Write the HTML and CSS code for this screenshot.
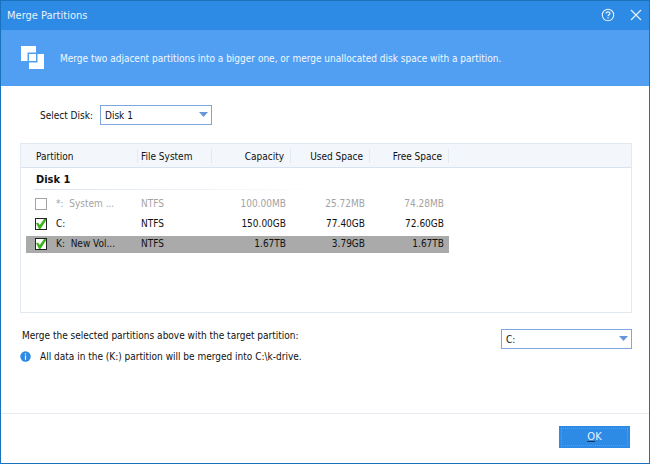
FILE: index.html
```html
<!DOCTYPE html>
<html lang="en">
<head>
<meta charset="utf-8">
<title>Merge Partitions</title>
<link rel="stylesheet" href="styles.css">
</head>
<body>
<main class="dialog">
  <header class="titlebar">
    <h1 class="title">Merge Partitions</h1>
    <button class="icon-button" type="button" aria-label="Help">
      <svg width="14" height="14" viewBox="0 0 14 14" fill="none" stroke="currentColor"><circle cx="7" cy="7" r="5.7" stroke-width="1.1"/><path d="M5.1 5.6C5.1 3.4 8.9 3.4 8.9 5.5C8.9 6.8 7 6.7 7 8.2M7 9.2V10.4" stroke-width="1.3"/></svg>
    </button>
    <button class="icon-button" type="button" aria-label="Close">
      <svg width="14" height="14" viewBox="0 0 14 14" fill="none" stroke="currentColor" stroke-width="1.2"><path d="M2 2L12 12M12 2L2 12"/></svg>
    </button>
  </header>
  <section class="banner">
    <svg class="banner-icon" width="24" height="24" viewBox="0 0 24 24"><path fill="#fff" d="M0 0H15V6.5H6.5V15H0ZM16.5 8H23V23H8V16.5H16.5ZM8 8H15V15H8Z"/></svg>
    <p>Merge two adjacent partitions into a bigger one, or merge unallocated disk space with a partition.</p>
  </section>
  <section class="content">
    <div class="disk-field">
      <label for="disk">Select Disk:</label>
      <span class="select disk-select"><select id="disk"><option>Disk 1</option></select></span>
    </div>
    <div class="list">
      <table>
        <colgroup><col class="col-name"><col class="col-fs"><col class="col-size"><col class="col-size"><col class="col-size"><col></colgroup>
        <thead>
          <tr><th scope="col">Partition</th><th scope="col">File System</th><th scope="col" class="num">Capacity</th><th scope="col" class="num">Used Space</th><th scope="col" class="num">Free Space</th><td></td></tr>
        </thead>
        <tbody>
          <tr class="group"><th colspan="6" scope="rowgroup">Disk 1</th></tr>
          <tr class="disabled"><td><label class="name"><input type="checkbox" disabled><span>*:&nbsp; System ...</span></label></td><td>NTFS</td><td class="num">100.00MB</td><td class="num">25.72MB</td><td class="num">74.28MB</td></tr>
          <tr><td><label class="name"><input type="checkbox" checked><span>C:</span></label></td><td>NTFS</td><td class="num">150.00GB</td><td class="num">77.40GB</td><td class="num">72.60GB</td></tr>
          <tr class="selected"><td><label class="name"><input type="checkbox" checked><span>K:&nbsp; New Vol...</span></label></td><td>NTFS</td><td class="num">1.67TB</td><td class="num">3.79GB</td><td class="num">1.67TB</td></tr>
        </tbody>
      </table>
    </div>
    <div class="target-field">
      <label for="target">Merge the selected partitions above with the target partition:</label>
      <span class="select target-select"><select id="target"><option>C:</option></select></span>
    </div>
    <p class="note">
      <svg width="11" height="11" viewBox="0 0 11 11"><circle cx="5.5" cy="5.5" r="5.2" fill="#2d8ae5"/><path d="M5.5 2.2V3.6M5.5 4.6V8.8" stroke="#fff" stroke-width="1.2"/></svg>
      <span>All data in the (K:) partition will be merged into C:\k-drive.</span>
    </p>
  </section>
  <footer class="footer"><button class="ok" type="button"><span><u>O</u>K</span></button></footer>
</main>
</body>
</html>
```
FILE: styles.css
```css
* { box-sizing: border-box; }

body {
  margin: 0;
  font: 10px/16px "DejaVu Sans Condensed", "DejaVu Sans", sans-serif;
  color: #111;
  background: #fff;
}

h1, p { margin: 0; font-weight: normal; }

button, select, input { font: inherit; color: inherit; margin: 0; }

.dialog {
  min-height: 100vh;
  display: flex;
  flex-direction: column;
  border: 1px solid #1a72bc;
}

.titlebar {
  display: flex;
  align-items: center;
  gap: 14px;
  height: 29px;
  padding: 0 6px 2px;
  color: #e8f3fe;
  background: #2d8ae5;
}

.title { flex: 1; padding-top: 2px; font-size: 11px; }

.icon-button {
  display: flex;
  padding: 0;
  border: 0;
  background: none;
}

.banner {
  display: flex;
  align-items: center;
  gap: 15px;
  height: 56px;
  padding: 0 20px;
  color: #f2f8ff;
  background: #519ff3;
}

.banner p { padding-top: 2px; }

.content {
  flex: 1;
  padding: 19px 17px 0 19px;
}

.disk-field {
  display: grid;
  grid-template-columns: 60px 112px;
  align-items: center;
  padding-left: 20px;
}

.disk-field label { padding-top: 2px; }

.select { position: relative; }

.select::after {
  content: "";
  position: absolute;
  top: 7px;
  right: 4px;
  width: 9px;
  height: 5px;
  background: #6797d8;
  clip-path: polygon(0 0, 100% 0, 50% 100%);
  pointer-events: none;
}

.select select {
  display: block;
  width: 100%;
  height: 20px;
  padding: 2px 4px 0;
  appearance: none;
  border: 1px solid #7da5df;
  border-radius: 0;
  background: #fff;
}

.list {
  min-height: 170px;
  margin-top: 18px;
  border: 1px solid #e3e9f1;
}

table {
  width: 100%;
  table-layout: fixed;
  border-collapse: separate;
  border-spacing: 0;
}

.col-name { width: 117px; }
.col-fs { width: 74px; }
.col-size { width: 79px; }

th, td {
  height: 20px;
  padding: 0 0 0 3px;
  font-weight: normal;
  text-align: left;
  white-space: nowrap;
}

th:first-child { padding-left: 15px; }
td:first-child { padding-left: 14px; }

.num { padding: 0 5px 0 0; text-align: right; }

thead th, thead td {
  height: 24px;
  padding-top: 2px;
  border-bottom: 1px solid #d9e2ef;
  background: #f3f7fb;
}

thead th {
  background: linear-gradient(#e3e9f1, #e3e9f1) right center / 1px 14px no-repeat #f3f7fb;
}

thead .num { padding: 2px 7px 0 0; }

.group th {
  height: 26px;
  padding-bottom: 3px;
  font-size: 11px;
  font-weight: bold;
  background: linear-gradient(to right, #d9e2ef, #fff) 13px 21px / 290px 1px no-repeat;
}

.disabled { color: #a3a3a3; }

.selected td { background: linear-gradient(#aaa, #aaa) 0 center / 100% 17px no-repeat; }
.selected td:first-child { background-position: 5px center; }

.name {
  display: flex;
  align-items: center;
  gap: 9px;
}

.name input {
  position: relative;
  width: 12px;
  height: 12px;
  appearance: none;
  border: 1px solid #222;
  background: #fff;
}

.name input:disabled { border-color: #a3a3a3; }

.name input:checked::before {
  content: "";
  position: absolute;
  inset: 0;
  background: #3cb21b;
  clip-path: polygon(0 40%, 22% 38%, 38% 60%, 80% 0, 100% 0, 100% 14%, 44% 100%, 30% 100%);
}

.target-field {
  display: flex;
  align-items: flex-start;
  justify-content: space-between;
  height: 20px;
  margin-top: 14px;
  padding-left: 2px;
}

.target-field label { padding-top: 1px; }

.target-select { width: 131px; margin-top: 2px; }

.note {
  display: flex;
  align-items: center;
  gap: 9px;
}

.note span { padding-top: 2px; }

.footer {
  display: flex;
  justify-content: flex-end;
  padding: 12px 19px 15px;
  border-top: 1px solid #e6eaf1;
}

.ok {
  width: 71px;
  height: 22px;
  padding: 2px;
  border: 0;
  font-size: 11px;
  color: #e8f3fe;
  background: #2d8ae5;
}

.ok span {
  display: block;
  border: 1px dotted #b08a60;
}

.ok u { text-decoration-color: #17304f; }
```
